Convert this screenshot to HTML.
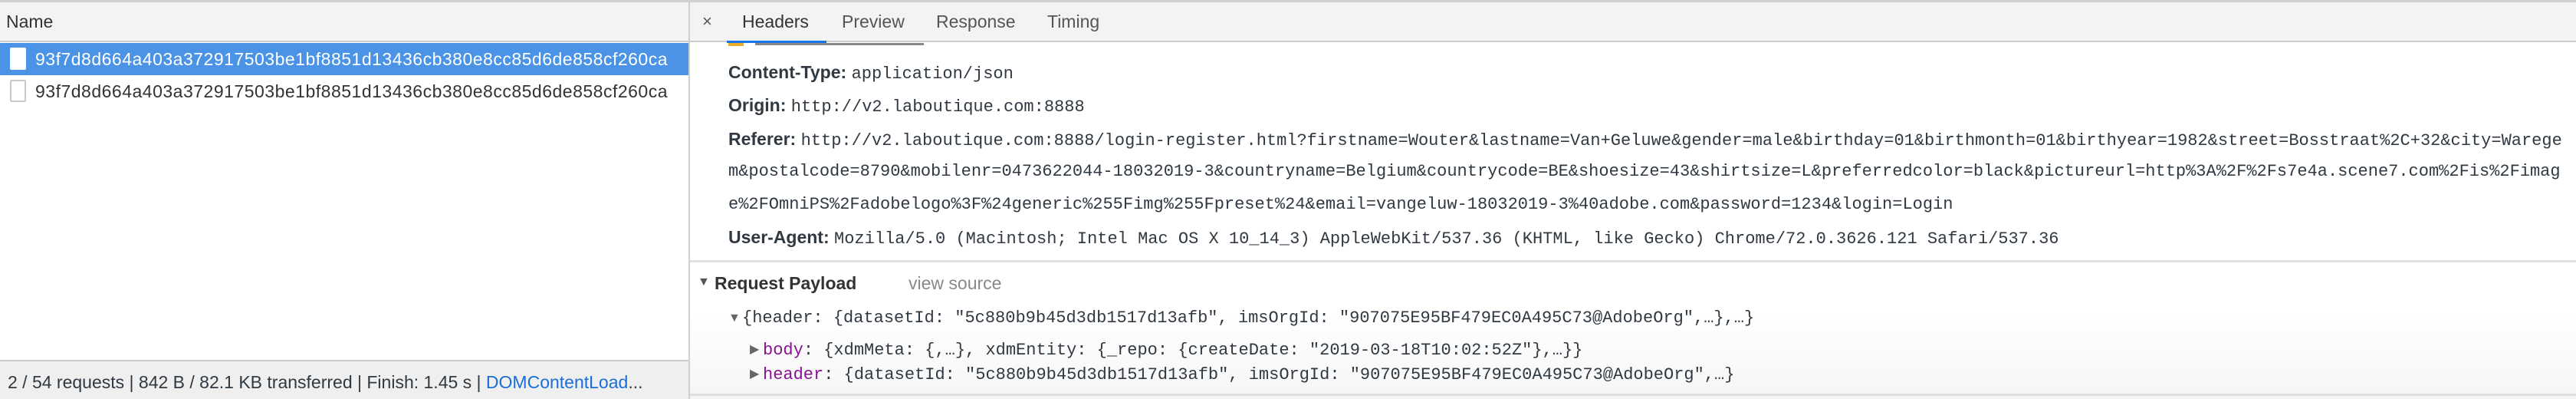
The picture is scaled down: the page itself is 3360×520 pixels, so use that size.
<!DOCTYPE html>
<html><head><meta charset="utf-8">
<style>
*{margin:0;padding:0;box-sizing:border-box}
body{width:3360px;height:520px;position:relative;overflow:hidden;background:#fff;font-family:"Liberation Sans",Arial,sans-serif;color:#303942;font-size:23px}
.a{position:absolute;white-space:nowrap;line-height:1}
.m{font-family:"Liberation Mono","DejaVu Sans Mono",monospace;font-size:22px}
.b{font-weight:bold}
.p{color:#881391}
</style></head><body>
<!-- top bar -->
<div class="a" style="left:0;top:0;width:3360px;height:3px;background:#d0d0d0"></div>
<div class="a" style="left:0;top:3px;width:3360px;height:50px;background:#f3f3f3"></div>
<div class="a" style="left:0;top:53px;width:3360px;height:2px;background:#cdcdcd"></div>
<div class="a" style="left:898px;top:3px;width:2px;height:517px;background:#d0d0d0"></div>
<div class="a" style="left:8px;top:17px;color:#333">Name</div>
<!-- rows -->
<div class="a" style="left:0;top:56px;width:898px;height:42px;background:#4a93e6"></div>
<div class="a" style="left:13px;top:62px;width:21px;height:29px;background:#fff;border-radius:2px"></div>
<div class="a" style="left:46px;top:66px;color:#fff;letter-spacing:.5px">93f7d8d664a403a372917503be1bf8851d13436cb380e8cc85d6de858cf260ca</div>
<div class="a" style="left:13px;top:104px;width:21px;height:29px;background:#fff;border:2px solid #c8c8c8;border-radius:2px"></div>
<div class="a" style="left:46px;top:108px;color:#333;letter-spacing:.5px">93f7d8d664a403a372917503be1bf8851d13436cb380e8cc85d6de858cf260ca</div>
<!-- status -->
<div class="a" style="left:0;top:469px;width:898px;height:2px;background:#cdcdcd"></div>
<div class="a" style="left:0;top:471px;width:898px;height:49px;background:#efefef"></div>
<div class="a" style="left:10px;top:487px;color:#303942">2 / 54 requests | 842 B / 82.1 KB transferred | Finish: 1.45 s | <span style="color:#1a6fd6">DOMContentLoad</span>...</div>
<!-- tabs -->
<div class="a" style="left:916px;top:17px;color:#555;font-size:22px">×</div>
<div class="a" style="left:968px;top:17px;color:#333">Headers</div>
<div class="a" style="left:1098px;top:17px;color:#555">Preview</div>
<div class="a" style="left:1221px;top:17px;color:#555">Response</div>
<div class="a" style="left:1366px;top:17px;color:#555">Timing</div>
<div class="a" style="left:948px;top:53px;width:130px;height:3px;background:#1a73e8"></div>
<!-- clipped provisional line -->
<div class="a" style="left:950px;top:56px;width:20px;height:4px;background:#e8b02a"></div>
<div class="a" style="left:985px;top:56px;width:220px;height:3px;background:#555;opacity:.7"></div>
<!-- headers -->
<div class="a" style="left:950px;top:83px"><span class="b">Content-Type:</span> <span class="m">application/json</span></div>
<div class="a" style="left:950px;top:126px"><span class="b">Origin:</span> <span class="m">http://v2.laboutique.com:8888</span></div>
<div class="a" style="left:950px;top:170px"><span class="b">Referer:</span> <span class="m">http://v2.laboutique.com:8888/login-register.html?firstname=Wouter&amp;lastname=Van+Geluwe&amp;gender=male&amp;birthday=01&amp;birthmonth=01&amp;birthyear=1982&amp;street=Bosstraat%2C+32&amp;city=Warege</span></div>
<div class="a m" style="left:950px;top:213px">m&amp;postalcode=8790&amp;mobilenr=0473622044-18032019-3&amp;countryname=Belgium&amp;countrycode=BE&amp;shoesize=43&amp;shirtsize=L&amp;preferredcolor=black&amp;pictureurl=http%3A%2F%2Fs7e4a.scene7.com%2Fis%2Fimag</div>
<div class="a m" style="left:950px;top:256px">e%2FOmniPS%2Fadobelogo%3F%24generic%255Fimg%255Fpreset%24&amp;email=vangeluw-18032019-3%40adobe.com&amp;password=1234&amp;login=Login</div>
<div class="a" style="left:950px;top:298px"><span class="b">User-Agent:</span> <span class="m">Mozilla/5.0 (Macintosh; Intel Mac OS X 10_14_3) AppleWebKit/537.36 (KHTML, like Gecko) Chrome/72.0.3626.121 Safari/537.36</span></div>
<div class="a" style="left:900px;top:339px;width:2460px;height:3px;background:#e0e0e0"></div>
<!-- payload -->
<div class="a" style="left:900px;top:342px;width:2460px;height:172px;background:linear-gradient(#fff 40%,#f6f6f6)"></div>
<div class="a" style="left:910px;top:360px;font-size:16px;color:#555">▼</div>
<div class="a b" style="left:932px;top:358px;color:#333">Request Payload</div>
<div class="a" style="left:1185px;top:358px;color:#888">view source</div>
<div class="a" style="left:950px;top:407px;font-size:16px;color:#666">▼</div>
<div class="a m" style="left:968px;top:404px">{header: {datasetId: "5c880b9b45d3db1517d13afb", imsOrgId: "907075E95BF479EC0A495C73@AdobeOrg",…},…}</div>
<div class="a" style="left:978px;top:448px;font-size:16px;color:#666">▶</div>
<div class="a m" style="left:995px;top:446px"><span class="p">body</span>: {xdmMeta: {,…}, xdmEntity: {_repo: {createDate: "2019-03-18T10:02:52Z"},…}}</div>
<div class="a" style="left:978px;top:480px;font-size:16px;color:#666">▶</div>
<div class="a m" style="left:995px;top:478px"><span class="p">header</span>: {datasetId: "5c880b9b45d3db1517d13afb", imsOrgId: "907075E95BF479EC0A495C73@AdobeOrg",…}</div>
<div class="a" style="left:900px;top:513px;width:2460px;height:3px;background:#dedede"></div>
<div class="a" style="left:900px;top:516px;width:2460px;height:4px;background:#f3f3f3"></div>
</body></html>
